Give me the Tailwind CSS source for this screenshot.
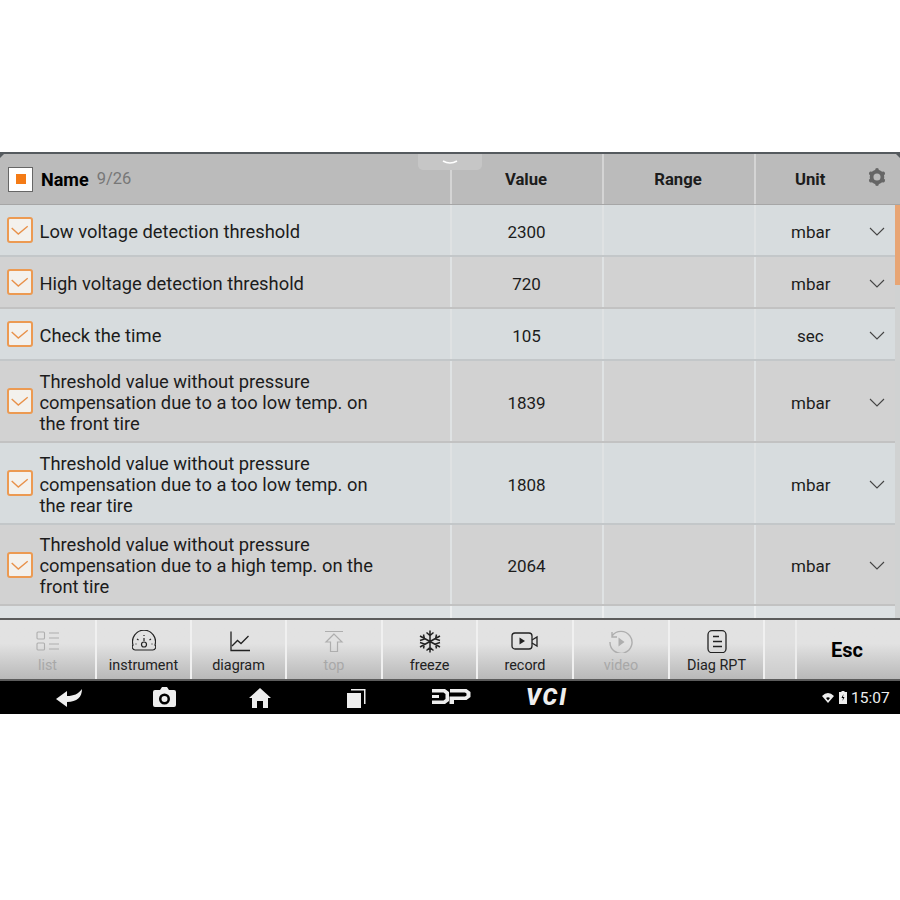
<!DOCTYPE html>
<html lang="en">
  <head>
    <meta charset="UTF-8" />
    <title>Live data</title>
    <script src="https://cdn.jsdelivr.net/npm/@tailwindcss/browser@4"></script>
  </head>
  <body class="bg-white font-['Roboto',sans-serif] text-[#1c1c1c]">
    <div class="h-[900px] w-[900px] pt-[152px] overflow-hidden">
      <div class="relative h-[562px] flex flex-col">
        <div class="h-[53px] shrink-0 flex bg-[#bbbbbb] border-t-2 border-[#555a5e] border-b border-b-[#a6a6a6]">
          <div class="w-[452px] shrink-0 flex items-center pl-[8px] border-r-2 border-[#d4d4d4]">
            <div class="w-[25px] h-[25px] bg-white border border-[#666] flex items-center justify-center">
              <div class="w-[10px] h-[10px] bg-[#f47b16]"></div>
            </div>
            <span class="ml-[8px] text-[18px] font-bold text-black">Name</span>
            <span class="ml-[8px] text-[16.5px] text-[#777]">9/26</span>
          </div>
          <div class="w-[152px] shrink-0 flex items-center justify-center pt-[2px] pr-[2px] text-[16.7px] font-bold border-r-2 border-[#d4d4d4]">Value</div>
          <div class="w-[152px] shrink-0 flex items-center justify-center pt-[2px] pr-[2px] text-[16.7px] font-bold border-r-2 border-[#d4d4d4]">Range</div>
          <div class="flex-1 relative flex items-center pl-[39px] pt-[2px] text-[16.7px] font-bold">
            <span>Unit</span>
            <svg class="absolute left-[111px] top-[13px]" width="20" height="20" viewBox="0 0 24 24" fill="none" stroke="#666"><circle cx="12" cy="12" r="6.500" stroke-width="4.500"/><path d="M12 3.500v1M12 19.500v1M19.400 7.800l-.9.500M4.600 16.200l.9-.5M19.400 16.200l-.9-.5M4.600 7.800l.9.500" stroke-width="4.500" stroke-linecap="round"/></svg>
          </div>
        </div>

        <!-- dark corners of the screen -->
        <svg class="absolute left-0 top-[2px]" width="4" height="4" viewBox="0 0 4 4" fill="#555a5e"><path d="M0 0h4L0 4z"/></svg>
        <svg class="absolute right-0 top-[2px]" width="4" height="4" viewBox="0 0 4 4" fill="#555a5e"><path d="M0 0h4v4z"/></svg>

        <!-- handle over the header -->
        <div class="absolute left-[418px] top-[2px] w-[64px] h-[16px] bg-[#c6c6c6] rounded-b-[5px] flex justify-center pt-[6px]">
          <svg width="16" height="5" viewBox="0 0 16 5" fill="none" stroke="white" stroke-width="1.600"><path d="M1 1q7 4 14 0"/></svg>
        </div>

        <div class="flex-1 min-h-0 flex flex-col">
          <div class="h-[52px] shrink-0 flex bg-[#d7dcde] border-b-2 border-[#c3c7c9]">
            <div class="w-[452px] shrink-0 flex items-center pl-[7px] border-r-2 border-[#dfe2e3]">
              <svg class="shrink-0" width="26" height="26" viewBox="0 0 26 26" fill="none"><rect x="1" y="1" width="24" height="24" rx="2" fill="#f3f1ed" stroke="#ec9a52" stroke-width="2"/><path d="M4.700 11l6.600 6 9.400-7.700" stroke="#e8914a" stroke-width="1.400"/></svg>
              <span class="ml-[6.500px] mt-[2px] text-[18.350px] leading-[21px]">Low voltage detection threshold</span>
            </div>
            <div class="w-[152px] shrink-0 flex items-center justify-center pt-[6px] pr-[1px] text-[17px] border-r-2 border-[#dfe2e3]">2300</div>
            <div class="w-[152px] shrink-0 border-r-2 border-[#dfe2e3]"></div>
            <div class="flex-1 flex items-center pl-[35px] text-[17px]">
              <span class="w-[78px] mt-[6px]">mbar</span>
              <svg class="mt-[2px]" width="16" height="9" viewBox="0 0 16 9" fill="none" stroke="#444" stroke-width="1.100"><path d="M1 1l7 7 7-7"/></svg>
            </div>
          </div>
          <div class="h-[52px] shrink-0 flex bg-[#d2d2d2] border-b-2 border-[#c2c2c2]">
            <div class="w-[452px] shrink-0 flex items-center pl-[7px] border-r-2 border-[#dfe2e3]">
              <svg class="shrink-0" width="26" height="26" viewBox="0 0 26 26" fill="none"><rect x="1" y="1" width="24" height="24" rx="2" fill="#f3f1ed" stroke="#ec9a52" stroke-width="2"/><path d="M4.700 11l6.600 6 9.400-7.700" stroke="#e8914a" stroke-width="1.400"/></svg>
              <span class="ml-[6.500px] mt-[2px] text-[18.350px] leading-[21px]">High voltage detection threshold</span>
            </div>
            <div class="w-[152px] shrink-0 flex items-center justify-center pt-[6px] pr-[1px] text-[17px] border-r-2 border-[#dfe2e3]">720</div>
            <div class="w-[152px] shrink-0 border-r-2 border-[#dfe2e3]"></div>
            <div class="flex-1 flex items-center pl-[35px] text-[17px]">
              <span class="w-[78px] mt-[6px]">mbar</span>
              <svg class="mt-[2px]" width="16" height="9" viewBox="0 0 16 9" fill="none" stroke="#444" stroke-width="1.100"><path d="M1 1l7 7 7-7"/></svg>
            </div>
          </div>
          <div class="h-[52px] shrink-0 flex bg-[#d7dcde] border-b-2 border-[#c3c7c9]">
            <div class="w-[452px] shrink-0 flex items-center pl-[7px] border-r-2 border-[#dfe2e3]">
              <svg class="shrink-0" width="26" height="26" viewBox="0 0 26 26" fill="none"><rect x="1" y="1" width="24" height="24" rx="2" fill="#f3f1ed" stroke="#ec9a52" stroke-width="2"/><path d="M4.700 11l6.600 6 9.400-7.700" stroke="#e8914a" stroke-width="1.400"/></svg>
              <span class="ml-[6.500px] mt-[2px] text-[18.350px] leading-[21px]">Check the time</span>
            </div>
            <div class="w-[152px] shrink-0 flex items-center justify-center pt-[6px] pr-[1px] text-[17px] border-r-2 border-[#dfe2e3]">105</div>
            <div class="w-[152px] shrink-0 border-r-2 border-[#dfe2e3]"></div>
            <div class="flex-1 flex items-center pl-[41px] text-[17px]">
              <span class="w-[72px] mt-[6px]">sec</span>
              <svg class="mt-[2px]" width="16" height="9" viewBox="0 0 16 9" fill="none" stroke="#444" stroke-width="1.100"><path d="M1 1l7 7 7-7"/></svg>
            </div>
          </div>
          <div class="h-[82px] shrink-0 flex bg-[#d2d2d2] border-b-2 border-[#c2c2c2]">
            <div class="w-[452px] shrink-0 flex items-center pl-[7px] border-r-2 border-[#dfe2e3]">
              <svg class="shrink-0" width="26" height="26" viewBox="0 0 26 26" fill="none"><rect x="1" y="1" width="24" height="24" rx="2" fill="#f3f1ed" stroke="#ec9a52" stroke-width="2"/><path d="M4.700 11l6.600 6 9.400-7.700" stroke="#e8914a" stroke-width="1.400"/></svg>
              <span class="ml-[6.500px] mt-[2px] w-[345px] text-[18.350px] leading-[21px]">Threshold value without pressure compensation due to a too low temp. on the front tire</span>
            </div>
            <div class="w-[152px] shrink-0 flex items-center justify-center pt-[6px] pr-[1px] text-[17px] border-r-2 border-[#dfe2e3]">1839</div>
            <div class="w-[152px] shrink-0 border-r-2 border-[#dfe2e3]"></div>
            <div class="flex-1 flex items-center pl-[35px] text-[17px]">
              <span class="w-[78px] mt-[6px]">mbar</span>
              <svg class="mt-[2px]" width="16" height="9" viewBox="0 0 16 9" fill="none" stroke="#444" stroke-width="1.100"><path d="M1 1l7 7 7-7"/></svg>
            </div>
          </div>
          <div class="h-[82px] shrink-0 flex bg-[#d7dcde] border-b-2 border-[#c3c7c9]">
            <div class="w-[452px] shrink-0 flex items-center pl-[7px] border-r-2 border-[#dfe2e3]">
              <svg class="shrink-0" width="26" height="26" viewBox="0 0 26 26" fill="none"><rect x="1" y="1" width="24" height="24" rx="2" fill="#f3f1ed" stroke="#ec9a52" stroke-width="2"/><path d="M4.700 11l6.600 6 9.400-7.700" stroke="#e8914a" stroke-width="1.400"/></svg>
              <span class="ml-[6.500px] mt-[2px] w-[345px] text-[18.350px] leading-[21px]">Threshold value without pressure compensation due to a too low temp. on the rear tire</span>
            </div>
            <div class="w-[152px] shrink-0 flex items-center justify-center pt-[6px] pr-[1px] text-[17px] border-r-2 border-[#dfe2e3]">1808</div>
            <div class="w-[152px] shrink-0 border-r-2 border-[#dfe2e3]"></div>
            <div class="flex-1 flex items-center pl-[35px] text-[17px]">
              <span class="w-[78px] mt-[6px]">mbar</span>
              <svg class="mt-[2px]" width="16" height="9" viewBox="0 0 16 9" fill="none" stroke="#444" stroke-width="1.100"><path d="M1 1l7 7 7-7"/></svg>
            </div>
          </div>
          <div class="h-[81px] shrink-0 flex bg-[#d2d2d2] border-b-2 border-[#c2c2c2]">
            <div class="w-[452px] shrink-0 flex items-center pl-[7px] border-r-2 border-[#dfe2e3]">
              <svg class="shrink-0" width="26" height="26" viewBox="0 0 26 26" fill="none"><rect x="1" y="1" width="24" height="24" rx="2" fill="#f3f1ed" stroke="#ec9a52" stroke-width="2"/><path d="M4.700 11l6.600 6 9.400-7.700" stroke="#e8914a" stroke-width="1.400"/></svg>
              <span class="ml-[6.500px] mt-[2px] w-[345px] text-[18.350px] leading-[21px]">Threshold value without pressure compensation due to a high temp. on the front tire</span>
            </div>
            <div class="w-[152px] shrink-0 flex items-center justify-center pt-[5px] pr-[1px] text-[17px] border-r-2 border-[#dfe2e3]">2064</div>
            <div class="w-[152px] shrink-0 border-r-2 border-[#dfe2e3]"></div>
            <div class="flex-1 flex items-center pl-[35px] text-[17px]">
              <span class="w-[78px] mt-[5px]">mbar</span>
              <svg class="mt-[1px]" width="16" height="9" viewBox="0 0 16 9" fill="none" stroke="#444" stroke-width="1.100"><path d="M1 1l7 7 7-7"/></svg>
            </div>
          </div>
          <div class="flex-1 flex bg-[#dde1e3]">
            <div class="w-[452px] shrink-0 border-r-2 border-[#eceeef]"></div>
            <div class="w-[152px] shrink-0 border-r-2 border-[#eceeef]"></div>
            <div class="w-[152px] shrink-0 border-r-2 border-[#eceeef]"></div>
          </div>
        </div>

        <!-- scrollbar -->
        <div class="absolute right-0 top-[53px] bottom-[96px] w-[5px] bg-[#d0d2d2]">
          <div class="h-[80px] bg-[#e8a574]"></div>
        </div>

        <div class="h-[63px] shrink-0 flex border-t-2 border-b-2 border-[#5c5c5c] bg-gradient-to-b from-[#e2e2e2] from-40% to-[#b9b9b9]">
          <div class="w-[97px] shrink-0 flex flex-col items-center pt-[10px] text-[14.400px] leading-[16px] text-[#a8a8a8] border-r-2 border-[#f0f0f0]">
            <svg width="24" height="23" viewBox="0 0 24 23" fill="none" stroke="#aeaeae" stroke-width="1.100"><rect x="1" y="2" width="7.500" height="7" rx="1"/><rect x="1" y="13" width="7.500" height="7" rx="1"/><path d="M13 3h10M13 8h10M13 14h10M13 19h10"/></svg>
            <span class="mt-[5px]">list</span>
          </div>
          <div class="w-[95px] shrink-0 flex flex-col items-center pt-[10px] text-[14.400px] leading-[16px] text-[#222] border-r-2 border-[#f0f0f0]">
            <svg width="24" height="23" viewBox="0 0 24 23" fill="none" stroke="#222" stroke-width="1.200"><path d="M3.500 20h17a3 3 0 0 0 2.500-5 11.500 11.500 0 1 0-22 0 3 3 0 0 0 2.500 5z"/><circle cx="12" cy="14.500" r="2.500"/><path d="M12 11l0-3M5 9l1.500 1M19 9l-1.500 1M12 5v1M3.500 14h1M19.500 14h1"/></svg>
            <span class="mt-[5px]">instrument</span>
          </div>
          <div class="w-[95px] shrink-0 flex flex-col items-center pt-[10px] text-[14.400px] leading-[16px] text-[#222] border-r-2 border-[#f0f0f0]">
            <svg width="24" height="23" viewBox="0 0 24 23" fill="none" stroke="#222" stroke-width="1.300"><path d="M4 1.500v19h19"/><path d="M5 16l5.500-5.500 3.500 3 7.500-7.500"/></svg>
            <span class="mt-[5px]">diagram</span>
          </div>
          <div class="w-[96px] shrink-0 flex flex-col items-center pt-[10px] text-[14.400px] leading-[16px] text-[#a8a8a8] border-r-2 border-[#f0f0f0]">
            <svg width="24" height="23" viewBox="0 0 24 23" fill="none" stroke="#aeaeae" stroke-width="1.200"><path d="M3 1.500h18M12 4l-8 8h4.500v9.500h7V12H20z"/></svg>
            <span class="mt-[5px]">top</span>
          </div>
          <div class="w-[95px] shrink-0 flex flex-col items-center pt-[10px] text-[14.400px] leading-[16px] text-[#222] border-r-2 border-[#f0f0f0]">
            <svg width="24" height="23" viewBox="0 0 24 23" fill="none" stroke="#222" stroke-width="1.500"><path d="M12 .5v22M2 6l20 11M22 6L2 17M8.500 2.500l3.500 3 3.500-3M8.500 20.500l3.500-3 3.500 3M2 10.500l4.500-1.500-1-4.500M22 10.500l-4.500-1.500 1-4.500M2 12.500l4.500 1.500-1 4.500M22 12.500l-4.500 1.500 1 4.500"/></svg>
            <span class="mt-[5px]">freeze</span>
          </div>
          <div class="w-[96px] shrink-0 flex flex-col items-center pt-[10px] text-[14.400px] leading-[16px] text-[#222] border-r-2 border-[#f0f0f0]">
            <svg width="28" height="23" viewBox="0 0 28 23" fill="none" stroke="#222" stroke-width="1.300"><rect x="1" y="3" width="20" height="16" rx="3"/><path d="M21 10l5-3v9l-5-3"/><path d="M8.500 7.500l5.500 3.500-5.500 3.500z" fill="#222" stroke="none"/></svg>
            <span class="mt-[5px]">record</span>
          </div>
          <div class="w-[96px] shrink-0 flex flex-col items-center pt-[10px] text-[14.400px] leading-[16px] text-[#a8a8a8] border-r-2 border-[#f0f0f0]">
            <svg width="24" height="23" viewBox="0 0 24 23" fill="none" stroke="#aeaeae" stroke-width="1.400"><path d="M3 6a11 11 0 1 1-2 6M3 2v5h5"/><path d="M9.500 7.500l6 4.500-6 4.500z" fill="#aeaeae" stroke="none"/></svg>
            <span class="mt-[5px]">video</span>
          </div>
          <div class="w-[95px] shrink-0 flex flex-col items-center pt-[10px] text-[14.400px] leading-[16px] text-[#222] border-r-2 border-[#f0f0f0]">
            <svg width="24" height="23" viewBox="0 0 24 23" fill="none" stroke="#222" stroke-width="1.300"><rect x="3" y="0.700" width="18" height="22" rx="4"/><path d="M8 6.500h6M8 11.500h9M8 16.500h9"/></svg>
            <span class="mt-[5px]">Diag RPT</span>
          </div>
          <div class="w-[30px] shrink-0 bg-[#dedede]/50"></div>
          <div class="flex-1 flex items-center justify-center pr-[3px] text-[20px] font-bold text-black border-l-2 border-[#ececec]">Esc</div>
        </div>

        <div class="h-[33px] shrink-0 bg-black relative flex items-center">
          <svg class="absolute left-[56px] top-[7px]" width="27" height="20" viewBox="0 0 27 20" fill="#eee"><path d="M0 11l11-8v5c7 0 11-2 15-7 0 8-5 13-15 13v5z"/></svg>
          <svg class="absolute left-[153px] top-[6px]" width="23" height="20" viewBox="0 0 23 20" fill="#eee"><path fill-rule="evenodd" d="M2 3h5l2-3h5l2 3h5a2 2 0 0 1 2 2v13a2 2 0 0 1-2 2H2a2 2 0 0 1-2-2V5a2 2 0 0 1 2-2zm9.500 3.500a5.500 5.500 0 1 0 0 11 5.500 5.500 0 0 0 0-11zm0 2.500a3 3 0 1 1 0 6 3 3 0 0 1 0-6z"/></svg>
          <svg class="absolute left-[249px] top-[7px]" width="22" height="20" viewBox="0 0 22 20" fill="#eee"><path d="M11 0l11 10h-3v10h-5v-7H8v7H3V10H0z"/></svg>
          <svg class="absolute left-[346px] top-[7px]" width="20" height="20" viewBox="0 0 20 20" fill="#eee"><path d="M1 5h14v15H1z"/><path d="M5 1h14.500v15H18V2.500H5z"/></svg>
          <svg class="absolute left-[431px] top-[7px]" width="41" height="18" viewBox="0 0 41 18" fill="#eee"><path d="M1 1h13l4 3v9l-4 3H1v-3.500h11.500l2-1.500V6l-2-1.500H1zM1 7h7v3H1zM19 1h16.500l4 3v5l-4 3H23v4h-4.500V8.500H34l1.500-1v-2l-1.500-1H19z"/></svg>
          <span class="absolute left-[526px] top-[4px] text-[23px] leading-[26px] font-black italic tracking-[2px] text-[#eee]">VCI</span>
          <svg class="absolute left-[822px] top-[12px]" width="12" height="10" viewBox="0 0 12 10" fill="#eee"><path fill-rule="evenodd" d="M0 3q6-6 12 0l-6 7zM4 5l2 2.500L8 5q-2-1.500-4 0z"/></svg>
          <svg class="absolute left-[839px] top-[10px]" width="8" height="13" viewBox="0 0 8 13" fill="#eee"><path fill-rule="evenodd" d="M2.500 0h3v1H8v12H0V1h2.500zM4.500 3L2.500 7h1.500l-.5 3 2-4H4z"/></svg>
          <span class="absolute left-[851px] top-[7px] text-[15.500px] leading-[20px] text-[#eee]">15:07</span>
        </div>
      </div>
    </div>
  </body>
</html>
